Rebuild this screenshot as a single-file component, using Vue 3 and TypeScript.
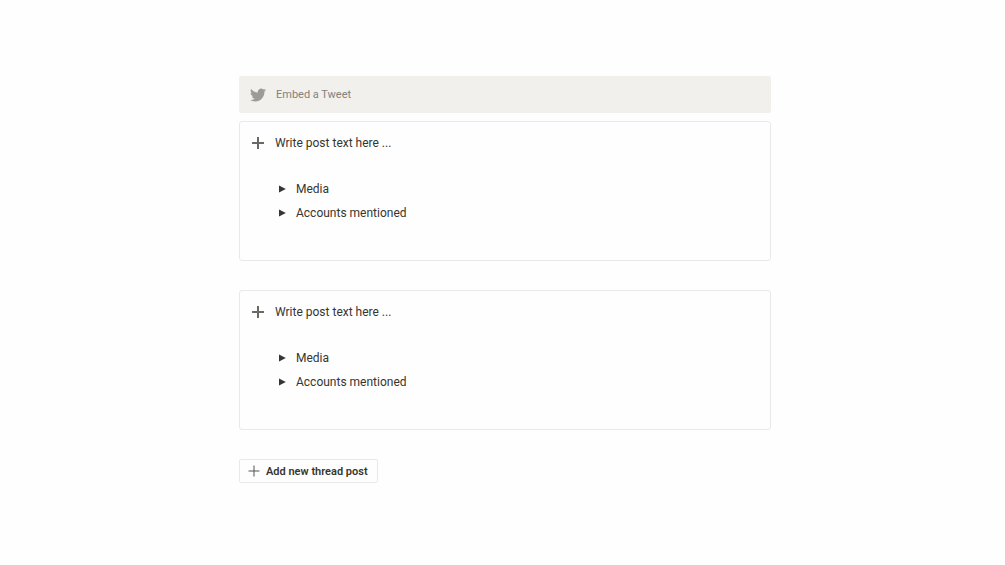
<script setup lang="ts">
import { ref } from 'vue'

interface Post {
  id: number
  text: string
  toggles: { label: string; open: boolean }[]
}

const createPost = (id: number): Post => ({
  id,
  text: '',
  toggles: [
    { label: 'Media', open: false },
    { label: 'Accounts mentioned', open: false },
  ],
})

const posts = ref<Post[]>([createPost(1), createPost(2)])

function addPost() {
  posts.value.push(createPost(posts.value.length + 1))
}
</script>

<template>
  <main class="page">
    <div class="thread">
      <button type="button" class="embed">
        <svg class="bird" viewBox="0 0 24 24" aria-hidden="true">
          <path d="M23.95 4.57a10 10 0 0 1-2.82.77 4.96 4.96 0 0 0 2.16-2.72c-.95.55-2 .95-3.13 1.18a4.92 4.92 0 0 0-8.38 4.48C7.69 8.09 4.07 6.13 1.64 3.16a4.82 4.82 0 0 0-.67 2.48c0 1.71.87 3.21 2.19 4.09a4.9 4.9 0 0 1-2.23-.61v.06a4.92 4.92 0 0 0 3.95 4.83 5 5 0 0 1-2.21.08 4.94 4.94 0 0 0 4.6 3.42A9.87 9.87 0 0 1 0 19.54a13.99 13.99 0 0 0 7.56 2.21c9.05 0 14-7.5 14-13.98 0-.21 0-.42-.02-.63a9.94 9.94 0 0 0 2.46-2.55z" />
        </svg>
        <span>Embed a Tweet</span>
      </button>

      <section v-for="post in posts" :key="post.id" class="post">
        <div class="post-head">
          <svg class="plus" viewBox="0 0 14 14" aria-hidden="true">
            <path d="M7 1v12M1 7h12" />
          </svg>
          <input
            v-model="post.text"
            class="post-text"
            type="text"
            placeholder="Write post text here ..."
            aria-label="Post text"
          />
        </div>
        <div class="toggles">
          <button
            v-for="toggle in post.toggles"
            :key="toggle.label"
            type="button"
            class="toggle"
            :aria-expanded="toggle.open"
            @click="toggle.open = !toggle.open"
          >
            <svg class="arrow" :class="{ open: toggle.open }" viewBox="0 0 8 8" aria-hidden="true">
              <path d="M1 .6 7.8 4 1 7.4z" />
            </svg>
            <span>{{ toggle.label }}</span>
          </button>
        </div>
      </section>

      <button type="button" class="add" @click="addPost">
        <svg class="add-plus" viewBox="0 0 12 12" aria-hidden="true">
          <path d="M6 .5v11M.5 6h11" />
        </svg>
        <span>Add new thread post</span>
      </button>
    </div>
  </main>
</template>

<style>
body {
  background: #fefefe;
}
</style>

<style scoped>
.page {
  box-sizing: border-box;
  padding: 76px 0 76px 5px;
  color: #37352f;
  font-family: Roboto, 'Liberation Sans', sans-serif;
  font-size: 12px;
}

.thread {
  max-width: 532px;
  margin: 0 auto;
}

button,
input {
  box-sizing: border-box;
  margin: 0;
  padding: 0;
  border: 0;
  background: transparent;
  color: inherit;
  font: inherit;
}

button {
  display: flex;
  align-items: center;
  cursor: pointer;
  text-align: left;
}

svg {
  flex: none;
}

.embed {
  width: 100%;
  height: 37px;
  margin-bottom: 8px;
  padding: 0 11px;
  gap: 10px;
  border-radius: 2px;
  background: #f1f0ec;
  color: #83817c;
  font-size: 11px;
}

.bird {
  width: 16px;
  height: 16px;
  fill: #9d9b97;
}

.post {
  margin-bottom: 29px;
  padding: 9px 11px 35px;
  border: 1px solid #e9e9e8;
  border-radius: 3px;
}

.post-head {
  display: flex;
  align-items: center;
  gap: 10px;
}

.plus {
  width: 14px;
  height: 14px;
  fill: none;
  stroke: #6b6964;
  stroke-width: 2;
}

.post-text {
  flex: 1;
  min-width: 0;
  height: 24px;
}

.post-text::placeholder {
  color: #37352f;
  opacity: 1;
}

.toggles {
  margin-top: 22px;
  padding-left: 27px;
}

.toggle {
  width: 100%;
  height: 24px;
  gap: 10px;
}

.arrow {
  width: 8px;
  height: 8px;
  fill: #37352f;
}

.arrow.open {
  transform: rotate(90deg);
}

.add {
  height: 24px;
  padding: 0 9px 0 8px;
  gap: 6px;
  border: 1px solid #e9e9e8;
  border-radius: 2px;
  font-size: 11px;
  font-weight: 600;
}

.add-plus {
  width: 12px;
  height: 12px;
  fill: none;
  stroke: #55534e;
}
</style>
